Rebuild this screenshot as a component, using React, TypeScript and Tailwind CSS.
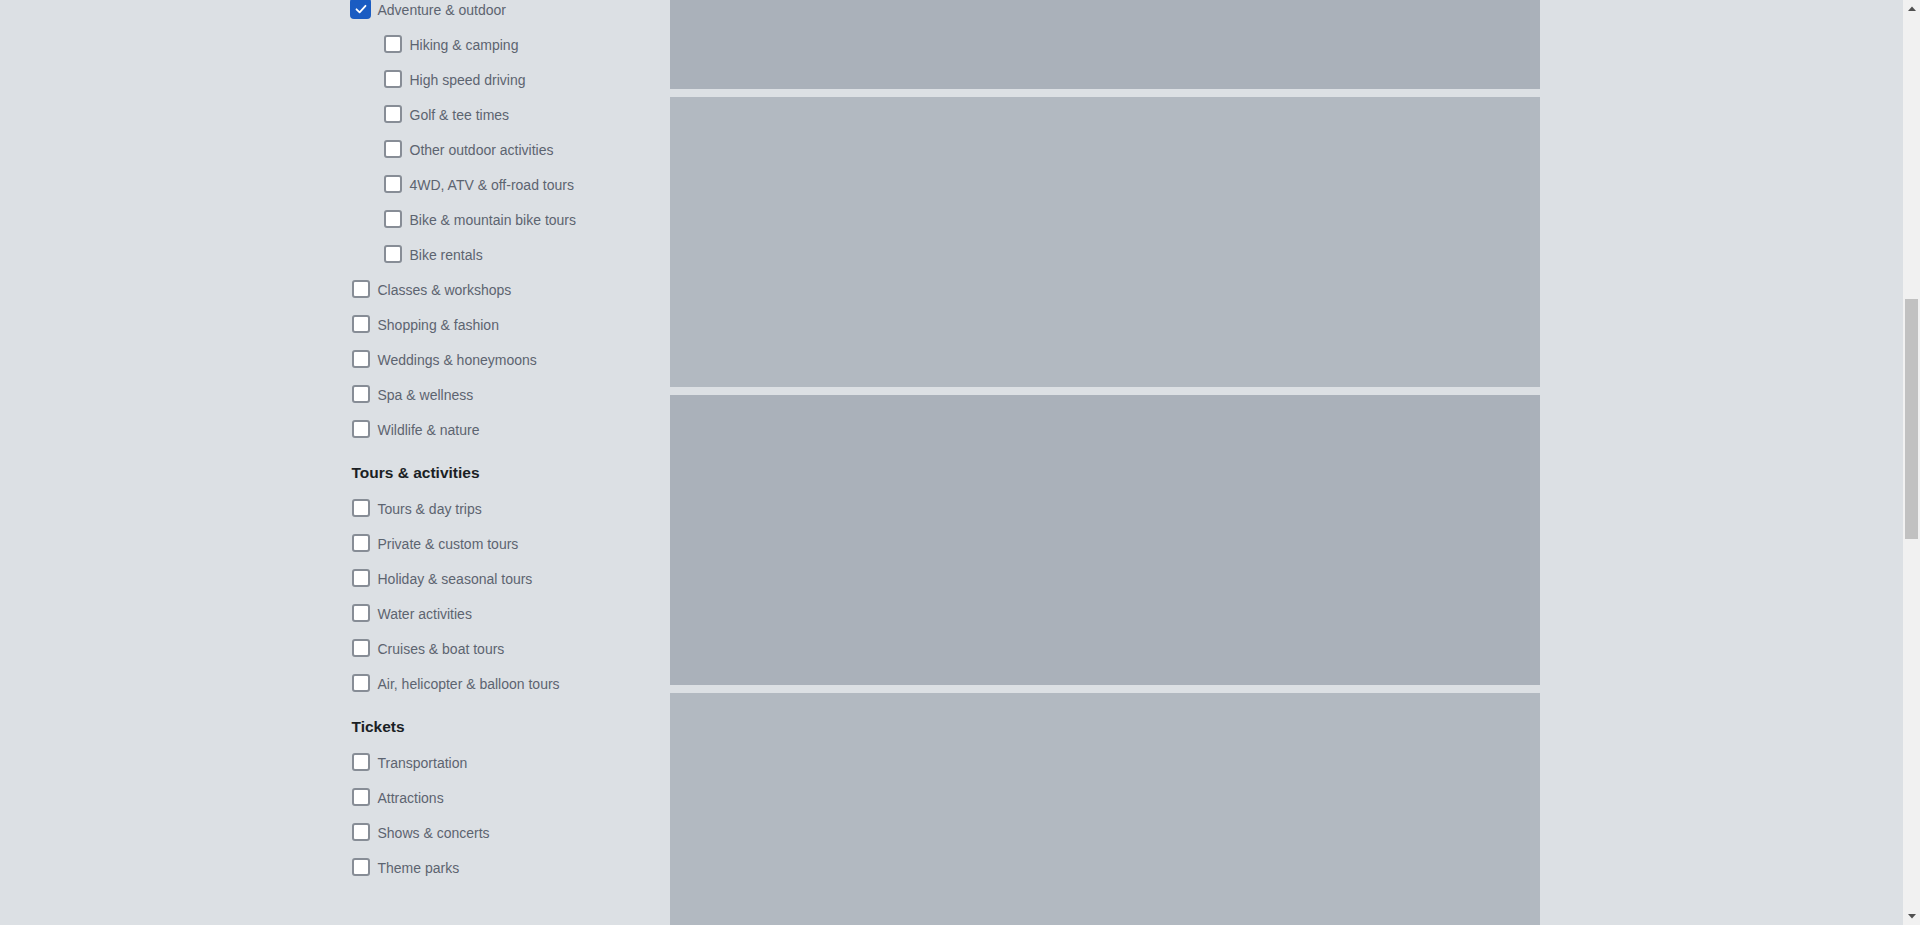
import { useLayoutEffect, useEffect } from "react";

type Item = { label: string; checked?: boolean; sub?: boolean };
type Section = { title: string; items: Item[] };

const sections: Section[] = [
  {
    title: "Duration",
    items: [
      { label: "Up to 1 hour" },
      { label: "1 to 4 hours" },
      { label: "4 hours to 1 day" },
      { label: "1 to 3 days" },
      { label: "3+ days" },
    ],
  },
  {
    title: "Types",
    items: [
      { label: "Food & drink" },
      { label: "Nightlife" },
      { label: "Art & culture" },
      { label: "Sightseeing" },
      { label: "Museums" },
      { label: "Historical tours" },
      { label: "Walking tours" },
      { label: "Day trips" },
      { label: "Multi-day trips" },
      { label: "Family-friendly" },
      { label: "Luxury experiences" },
      { label: "Sports" },
      { label: "Photography" },
      { label: "Music" },
      { label: "Local experiences" },
      { label: "Adventure & outdoor", checked: true },
      { label: "Hiking & camping", sub: true },
      { label: "High speed driving", sub: true },
      { label: "Golf & tee times", sub: true },
      { label: "Other outdoor activities", sub: true },
      { label: "4WD, ATV & off-road tours", sub: true },
      { label: "Bike & mountain bike tours", sub: true },
      { label: "Bike rentals", sub: true },
      { label: "Classes & workshops" },
      { label: "Shopping & fashion" },
      { label: "Weddings & honeymoons" },
      { label: "Spa & wellness" },
      { label: "Wildlife & nature" },
    ],
  },
  {
    title: "Tours & activities",
    items: [
      { label: "Tours & day trips" },
      { label: "Private & custom tours" },
      { label: "Holiday & seasonal tours" },
      { label: "Water activities" },
      { label: "Cruises & boat tours" },
      { label: "Air, helicopter & balloon tours" },
    ],
  },
  {
    title: "Tickets",
    items: [
      { label: "Transportation" },
      { label: "Attractions" },
      { label: "Shows & concerts" },
      { label: "Theme parks" },
    ],
  },
];

function Box({ checked }: { checked?: boolean }) {
  return (
    <span className="flex w-[18px] shrink-0 justify-center">
      {checked ? (
        <span className="flex h-[21px] w-[21px] shrink-0 items-center justify-center rounded-[4px] bg-[#1a5cc2]">
          <svg width="14" height="14" viewBox="0 0 14 14" fill="none">
            <path
              d="M2.5 7.3 L5.6 10.3 L11.5 3.8"
              stroke="white"
              strokeWidth="1.8"
              strokeLinecap="round"
              strokeLinejoin="round"
            />
          </svg>
        </span>
      ) : (
        <span className="h-[18px] w-[18px] shrink-0 rounded-[3px] border-2 border-[#878d96] bg-white" />
      )}
    </span>
  );
}

function Row({ item }: { item: Item }) {
  return (
    <label
      className={
        "flex h-[35px] items-center gap-[8px] " + (item.sub ? "pl-[32px]" : "pl-0")
      }
    >
      <Box checked={item.checked} />
      <span className="pt-[2px] text-[14px] leading-[20px] text-[#5c6470]">{item.label}</span>
    </label>
  );
}

const blocks = Array.from({ length: 10 }, (_, i) => i);

function FakeScrollbar() {
  return (
    <div className="fixed right-0 top-0 flex h-screen w-[17px] flex-col bg-[#f1f1f1]">
      <div className="flex h-[17px] items-center justify-center">
        <svg width="8" height="5" viewBox="0 0 8 5">
          <path d="M0 5 L4 0.5 L8 5 Z" fill="#505050" />
        </svg>
      </div>
      <div className="relative flex-1">
        <div className="absolute left-[2px] top-[282px] h-[240px] w-[13px] bg-[#c1c1c1]" />
      </div>
      <div className="flex h-[17px] items-center justify-center">
        <svg width="8" height="5" viewBox="0 0 8 5">
          <path d="M0 0 L8 0 L4 4.5 Z" fill="#505050" />
        </svg>
      </div>
    </div>
  );
}

export default function App() {
  useLayoutEffect(() => {
    window.scrollTo(0, 1087);
  }, []);
  useEffect(() => {
    const t = setTimeout(() => window.scrollTo(0, 1087), 0);
    return () => clearTimeout(t);
  }, []);

  return (
    <div className="min-h-[3434px] bg-[#dce0e4] pr-[17px] font-['Liberation_Sans',Arial,sans-serif]">
      <div className="mx-auto w-[1200px] pt-[120px]">
        <div className="flex h-[170px] flex-col justify-center gap-2">
          <div className="text-[14px] text-[#5c6470]">Home / Things to do</div>
          <div className="text-[28px] font-bold text-[#1b1f24]">Things to do</div>
        </div>
        <div className="flex gap-[24px] pb-[172px]">
          <aside className="w-[294px] shrink-0">
            {sections.map((s) => (
              <div key={s.title}>
                <div className="h-[44px] pt-[16px] text-[15.5px] font-bold leading-[22px] text-[#1b1f24]">
                  {s.title}
                </div>
                {s.items.map((it) => (
                  <Row key={it.label} item={it} />
                ))}
              </div>
            ))}
          </aside>
          <main className="flex w-[870px] flex-col gap-[8px]">
            {blocks.map((i) => (
              <div
                key={i}
                className={
                  "h-[290px] w-full " + (i % 2 === 0 ? "bg-[#aab1ba]" : "bg-[#b2b9c1]")
                }
              />
            ))}
          </main>
        </div>
      </div>
      <FakeScrollbar />
    </div>
  );
}
